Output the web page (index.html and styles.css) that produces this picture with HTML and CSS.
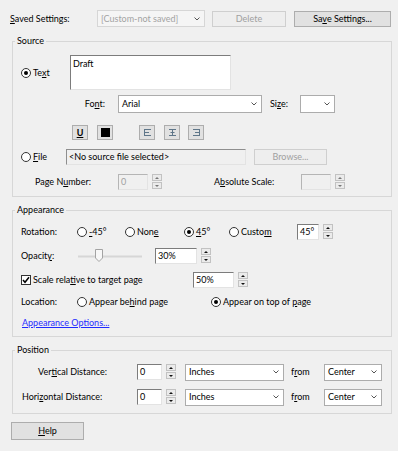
FILE: index.html
```html
<!DOCTYPE html>
<html lang="en">
<head>
	<meta charset="utf-8" />
	<title>Watermark</title>
	<link rel="stylesheet" href="styles.css">
</head>
<body>
<div class="dialog">

<div class="top-row">
  <span class="top-label"><u>S</u>aved Settings:</span>
  <div class="combo combo-off saved">
    <span class="combo-text">[Custom-not saved]</span>
    <span class="combo-arrow"><svg width="6" height="4" viewBox="0 0 6 4"><path d="M0.5 0.5L3 3L5.5 0.5" fill="none" stroke="#555"/></svg></span>
  </div>
  <div class="btn btn-off delete">Delete</div>
  <div class="btn save"><span>Sa<u>v</u>e Settings...</span></div>
</div>

<fieldset class="group source">
  <legend>Source</legend>
  <div class="row row-text">
    <label class="opt opt-text"><span class="radio checked"></span><span>Te<u>x</u>t</span></label>
    <div class="field textarea">Draft</div>
  </div>
  <div class="row row-font">
    <span class="lbl lbl-font">Fo<u>n</u>t:</span>
    <div class="combo font-sel">
      <span class="combo-text">Arial</span>
      <span class="combo-arrow"><svg width="6" height="4" viewBox="0 0 6 4"><path d="M0.5 0.5L3 3L5.5 0.5" fill="none" stroke="#555"/></svg></span>
    </div>
    <span class="lbl lbl-size">Si<u>z</u>e:</span>
    <div class="combo size-sel">
      <span class="combo-text"></span>
      <span class="combo-arrow"><svg width="6" height="4" viewBox="0 0 6 4"><path d="M0.5 0.5L3 3L5.5 0.5" fill="none" stroke="#555"/></svg></span>
    </div>
  </div>
  <div class="row row-format">
    <div class="fmt"><span class="u-icon">U</span></div>
    <div class="fmt fmt-color"><span class="swatch"></span></div>
    <div class="fmt fmt-left"><svg width="9" height="7" viewBox="0 0 9 7"><path d="M1 0.5H8M1 3.5H6M1 6.5H8M1.5 0V7" fill="none" stroke="#5f7689"/></svg></div>
    <div class="fmt fmt-center"><svg width="9" height="7" viewBox="0 0 9 7"><path d="M1 0.5H8M2.5 3.5H6.5M1 6.5H8M4.5 0V7" fill="none" stroke="#5f7689"/></svg></div>
    <div class="fmt fmt-right"><svg width="9" height="7" viewBox="0 0 9 7"><path d="M1 0.5H8M3 3.5H8M1 6.5H8M7.5 0V7" fill="none" stroke="#5f7689"/></svg></div>
  </div>
  <div class="row row-file">
    <label class="opt opt-file"><span class="radio"></span><span><u>F</u>ile</span></label>
    <div class="field field-ro file-field">&lt;No source file selected&gt;</div>
    <div class="btn btn-off browse">Browse...</div>
  </div>
  <div class="row row-page">
    <span class="lbl lbl-page">Page N<u>u</u>mber:</span>
    <div class="field field-off page-field">0</div>
    <span class="spin spin-off"><span class="spin-up"></span><span class="spin-down"></span></span>
    <span class="lbl lbl-scale">A<u>b</u>solute Scale:</span>
    <div class="field field-off scale-field"></div>
    <span class="spin spin-off"><span class="spin-up"></span><span class="spin-down"></span></span>
  </div>
</fieldset>

<fieldset class="group appearance">
  <legend>Appearance</legend>
  <div class="row row-rot">
    <span class="lbl lbl-left">Rotation:</span>
    <label class="opt rot-m45"><span class="radio"></span><span><u>-</u>45°</span></label>
    <label class="opt rot-none"><span class="radio"></span><span>Non<u>e</u></span></label>
    <label class="opt rot-45"><span class="radio checked"></span><span><u>4</u>5°</span></label>
    <label class="opt rot-custom"><span class="radio"></span><span>Custo<u>m</u></span></label>
    <div class="field rot-field">45°</div>
    <span class="spin"><span class="spin-up"></span><span class="spin-down"></span></span>
  </div>
  <div class="row row-opac">
    <span class="lbl lbl-opac">Opacit<u>y</u>:</span>
    <svg class="slider" width="64" height="14" viewBox="0 0 64 14">
      <path d="M0 7.5H64" stroke="#d6d6d6" stroke-width="2"/>
      <path d="M17.5 0.5H24.5V9L21 12.5L17.5 9Z" fill="#f7f7f7" stroke="#a3a3a3"/>
    </svg>
    <div class="field opac-field">30%</div>
    <span class="spin"><span class="spin-up"></span><span class="spin-down"></span></span>
  </div>
  <div class="row row-scale">
    <label class="opt opt-scale"><span class="check"><svg width="8" height="8" viewBox="0 0 8 8"><path d="M1 4L3 6.3L7 1.2" fill="none" stroke="#000" stroke-width="1.5"/></svg></span><span>Scale rela<u>t</u>ive to target page</span></label>
    <div class="field scalepct-field">50%</div>
    <span class="spin"><span class="spin-up"></span><span class="spin-down"></span></span>
  </div>
  <div class="row row-loc">
    <span class="lbl lbl-left">Location:</span>
    <label class="opt loc-behind"><span class="radio"></span><span>Appear be<u>h</u>ind page</span></label>
    <label class="opt"><span class="radio checked"></span><span>Appear on top of <u>p</u>age</span></label>
  </div>
  <div class="row row-link">
    <a class="link" href="#">Appearance Options...</a>
  </div>
</fieldset>

<fieldset class="group position">
  <legend>Position</legend>
  <div class="row row-vert">
    <span class="lbl lbl-dist lbl-vert">Ver<u>t</u>ical Distance:</span>
    <div class="field dist-field">0</div>
    <span class="spin"><span class="spin-up"></span><span class="spin-down"></span></span>
    <div class="combo unit-sel">
      <span class="combo-text">Inches</span>
      <span class="combo-arrow"><svg width="6" height="4" viewBox="0 0 6 4"><path d="M0.5 0.5L3 3L5.5 0.5" fill="none" stroke="#555"/></svg></span>
    </div>
    <span class="lbl lbl-from">f<u>r</u>om</span>
    <div class="combo from-sel">
      <span class="combo-text">Center</span>
      <span class="combo-arrow"><svg width="6" height="4" viewBox="0 0 6 4"><path d="M0.5 0.5L3 3L5.5 0.5" fill="none" stroke="#555"/></svg></span>
    </div>
  </div>
  <div class="row row-horz">
    <span class="lbl lbl-dist">Hori<u>z</u>ontal Distance:</span>
    <div class="field dist-field">0</div>
    <span class="spin"><span class="spin-up"></span><span class="spin-down"></span></span>
    <div class="combo unit-sel">
      <span class="combo-text">Inches</span>
      <span class="combo-arrow"><svg width="6" height="4" viewBox="0 0 6 4"><path d="M0.5 0.5L3 3L5.5 0.5" fill="none" stroke="#555"/></svg></span>
    </div>
    <span class="lbl lbl-from">f<u>r</u>om</span>
    <div class="combo from-sel">
      <span class="combo-text">Center</span>
      <span class="combo-arrow"><svg width="6" height="4" viewBox="0 0 6 4"><path d="M0.5 0.5L3 3L5.5 0.5" fill="none" stroke="#555"/></svg></span>
    </div>
  </div>
</fieldset>

<div class="btn help"><span><u>H</u>elp</span></div>

</div>
</body>
</html>
```

FILE: styles.css
```css
body {
  margin: 0;
  background: #f0f0f0;
  color: #000;
  font-family: Lato, "Noto Sans", sans-serif;
  font-size: 9px;
  line-height: 12px;
}

.dialog {
  padding: 10px 6px 0 10px;
}

u {
  text-underline-offset: 1px;
}

/* top bar */
.top-row {
  display: flex;
  align-items: center;
  height: 17px;
}

.top-label {
  width: 87px;
}

/* combo boxes */
.combo {
  display: flex;
  align-items: center;
  box-sizing: border-box;
  height: 17px;
  border: 1px solid #acacac;
  background: #fff;
}

.combo-text {
  flex: 1;
  padding-left: 3px;
  white-space: nowrap;
  overflow: hidden;
}

.combo-arrow {
  width: 14px;
  display: flex;
  align-items: center;
  justify-content: center;
}

.combo-off {
  border-color: #d6d6d6;
  background: #f5f5f5;
  color: #a3a3a3;
}

.saved { width: 108px; }
.font-sel { width: 144px; height: 18px; }
.size-sel { width: 35px; height: 18px; }
.unit-sel { width: 99px; margin-left: 9px; }
.from-sel { width: 58px; }

/* buttons */
.btn {
  display: flex;
  align-items: center;
  justify-content: center;
  box-sizing: border-box;
  height: 16px;
  border: 1px solid #adadad;
  background: #e1e1e1;
}

.btn-off {
  border-color: #cfcfcf;
  background: #eeeeee;
  color: #a0a0a0;
}

.delete { width: 74px; margin-left: 7px; }
.save { width: 97px; margin-left: 8px; }
.browse { width: 73px; margin-left: 8px; }

.help {
  width: 73px;
  height: 18px;
  margin: 8px 0 0 1px;
}

/* group boxes */
.group {
  margin: 7px 0 0 2px;
  padding: 8px 0 6px 8px;
  border: 1px solid #d7d7d7;
  min-width: 0;
}

.group legend {
  padding: 0 2px;
  margin-left: -6px;
  line-height: 12px;
}

.source { margin-top: 8px; }
.position { padding-bottom: 8px; }

.row {
  display: flex;
  align-items: center;
  height: 16px;
}

.lbl {
  white-space: nowrap;
}

/* text fields */
.field {
  box-sizing: border-box;
  height: 16px;
  padding-left: 2px;
  border: 1px solid;
  border-color: #7c7c7c #e3e3e3 #e3e3e3 #7c7c7c;
  background: #fff;
  line-height: 13px;
  white-space: nowrap;
}

.field-ro {
  background: #f0f0f0;
  border-color: #8e8e8e #e3e3e3 #e3e3e3 #8e8e8e;
}

.field-off {
  background: #f0f0f0;
  border-color: #b5b5b5 #e3e3e3 #e3e3e3 #b5b5b5;
  color: #a0a0a0;
}

.textarea {
  width: 161px;
  height: 35px;
  padding-top: 1px;
}

/* spin arrows */
.spin {
  display: flex;
  flex-direction: column;
  gap: 1px;
  margin-left: 4px;
  height: 16px;
}

.spin-up,
.spin-down {
  box-sizing: border-box;
  width: 10px;
  height: 7px;
  border: 1px solid #c2c2c2;
  background: #ebebeb;
  display: flex;
  align-items: center;
  justify-content: center;
}

.spin-up::after {
  content: "";
  border-left: 2px solid transparent;
  border-right: 2px solid transparent;
  border-bottom: 2px solid #111;
}

.spin-down::after {
  content: "";
  border-left: 2px solid transparent;
  border-right: 2px solid transparent;
  border-top: 2px solid #111;
}

.spin-off .spin-up::after { border-bottom-color: #777; }
.spin-off .spin-down::after { border-top-color: #777; }

/* radios and checkbox */
.opt {
  display: flex;
  align-items: center;
  white-space: nowrap;
}

.radio {
  box-sizing: border-box;
  width: 10px;
  height: 10px;
  margin-right: 2px;
  border: 1px solid #333;
  border-radius: 50%;
  background: #fff;
  display: flex;
  align-items: center;
  justify-content: center;
}

.radio.checked::after {
  content: "";
  width: 4px;
  height: 4px;
  border-radius: 50%;
  background: #000;
}

.check {
  box-sizing: border-box;
  width: 10px;
  height: 10px;
  margin-right: 2px;
  border: 1px solid #333;
  background: #fff;
  display: flex;
  align-items: center;
  justify-content: center;
}

/* source rows */
.row-text { height: 35px; }
.opt-text { width: 49px; }

.row-font { height: 18px; margin-top: 5px; }
.lbl-font { width: 84px; padding-right: 13px; text-align: right; }
.lbl-size { width: 30px; margin-left: 8px; }

.row-format { height: 15px; margin-top: 12px; padding-left: 51px; gap: 9px; }
.fmt {
  box-sizing: border-box;
  width: 16px;
  height: 15px;
  border: 1px solid #adadad;
  background: #e1e1e1;
  display: flex;
  align-items: center;
  justify-content: center;
}
.fmt-left { margin-left: 17px; }
.fmt-right { margin-left: -1px; }

.u-icon {
  font-weight: bold;
  text-decoration: underline;
  line-height: 10px;
}

.swatch {
  width: 9px;
  height: 9px;
  background: #000;
}

.row-file { margin-top: 9px; }
.opt-file { width: 45px; }
.file-field { width: 180px; }

.row-page { margin-top: 9px; }
.lbl-page { width: 83px; padding-left: 14px; }
.page-field { width: 30px; }
.lbl-scale { width: 87px; padding-left: 52px; }
.scale-field { width: 30px; }

/* appearance rows */
.lbl-left { width: 56px; }
.rot-m45 { width: 48px; }
.rot-none { width: 59px; }
.rot-45 { width: 45px; }
.rot-custom { width: 68px; }
.rot-field { width: 22px; }

.row-opac { margin-top: 8px; }
.lbl-opac { width: 57px; }
.opac-field { width: 42px; margin-left: 13px; }

.row-scale { margin-top: 8px; }
.opt-scale { width: 172px; }
.scalepct-field { width: 41px; }

.row-loc { margin-top: 6px; }
.loc-behind { width: 134px; }

.row-link { height: 14px; margin-top: 6px; padding-left: 1px; }
.link {
  color: #1f2bff;
  text-decoration: underline;
}

/* position rows */
.lbl-dist { width: 115px; padding-left: 1px; }
.lbl-vert { width: 99px; padding-left: 17px; }
.dist-field { width: 25px; }
.lbl-from { width: 33px; padding-left: 7px; }
.row-horz { margin-top: 9px; }
```
